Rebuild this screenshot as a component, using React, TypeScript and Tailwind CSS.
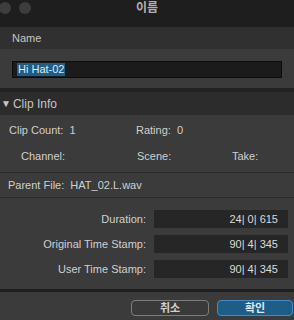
const FONT = { fontFamily: '"Liberation Sans", "Noto Sans CJK KR", sans-serif' }

const TIMES = [
  { label: 'Duration:', value: '24| 0| 615' },
  { label: 'Original Time Stamp:', value: '90| 4| 345' },
  { label: 'User Time Stamp:', value: '90| 4| 345' },
]

export default function App() {
  return (
    <div
      className="h-[320px] w-[294px] overflow-hidden bg-[#3b3b3b] text-[11px] text-[#cfcfcf]"
      style={FONT}
    >
      {/* title bar */}
      <div className="grid h-[27px] grid-cols-[1fr_auto_1fr] items-center bg-[#1e1e1e]">
        <div className="flex items-center gap-[8px]">
          <span className="-ml-[1px] -mt-[11px] h-[12px] w-[12px] rounded-full bg-[#3d3d3d]" />
          <span className="-mt-[11px] h-[12px] w-[12px] rounded-full bg-[#3d3d3d]" />
        </div>
        <div className="-mt-[11px] text-[12px] font-bold text-[#b0b0b0]">이름</div>
        <div />
      </div>

      {/* name */}
      <div className="flex h-[22px] items-center bg-[#303030] px-[12px] text-[#c6c6c6]">Name</div>
      <div className="px-[12px] pb-[10px] pt-[12px]">
        <div className="flex h-[17px] items-center border border-[#0c0c0c] bg-[#1b1b1b] pl-[4px]">
          <span className="bg-[#1d5d89] px-[1px] leading-[13px] text-[#e6e6e6]">Hi Hat-02</span>
        </div>
      </div>

      <div className="h-[4px] bg-[#222222]" />

      {/* clip info */}
      <div className="flex h-[23px] items-center gap-[2px] bg-[#2c2c2c] pl-[1px] text-[12px] text-[#c4c4c4]">
        <span className="text-[10px]">▼</span>
        <span>Clip Info</span>
      </div>

      <div className="grid grid-cols-[127px_1fr] pl-[9px] pt-[9px] leading-[13px]">
        <span>Clip Count:&nbsp; 1</span>
        <span>Rating:&nbsp; 0</span>
      </div>
      <div className="grid grid-cols-[116px_95px_1fr] pl-[21px] pt-[13px] leading-[13px]">
        <span>Channel:</span>
        <span>Scene:</span>
        <span>Take:</span>
      </div>

      <div className="mt-[9px] border-t border-[#2b2b2b]" />
      <div className="flex h-[24px] items-center pl-[8px]">Parent File:&nbsp; HAT_02.L.wav</div>
      <div className="border-t border-[#2b2b2b]" />

      {/* time stamps */}
      <div className="flex flex-col gap-[7px] pr-[6px] pt-[12px]">
        {TIMES.map((t) => (
          <div key={t.label} className="grid grid-cols-[146px_1fr] items-center gap-[8px]">
            <span className="text-right">{t.label}</span>
            <span className="flex h-[18px] items-center justify-end bg-[#262626] pr-[10px] text-[#dadada]">
              {t.value}
            </span>
          </div>
        ))}
      </div>

      <div className="mt-[11px] h-[3px] bg-[#1f1f1f]" />

      {/* buttons */}
      <div className="flex justify-end gap-[8px] pr-[1px] pt-[8px]">
        <button className="h-[16px] w-[78px] rounded-[4px] border border-[#7d7d7d] bg-[#3a3a3a] text-[11px] font-bold leading-none text-[#cfcfcf]">
          취소
        </button>
        <button className="h-[16px] w-[76px] rounded-[4px] border border-[#3e8ccc] bg-[#1e5d88] text-[11px] font-bold leading-none text-[#dfe8ef]">
          확인
        </button>
      </div>
    </div>
  )
}
